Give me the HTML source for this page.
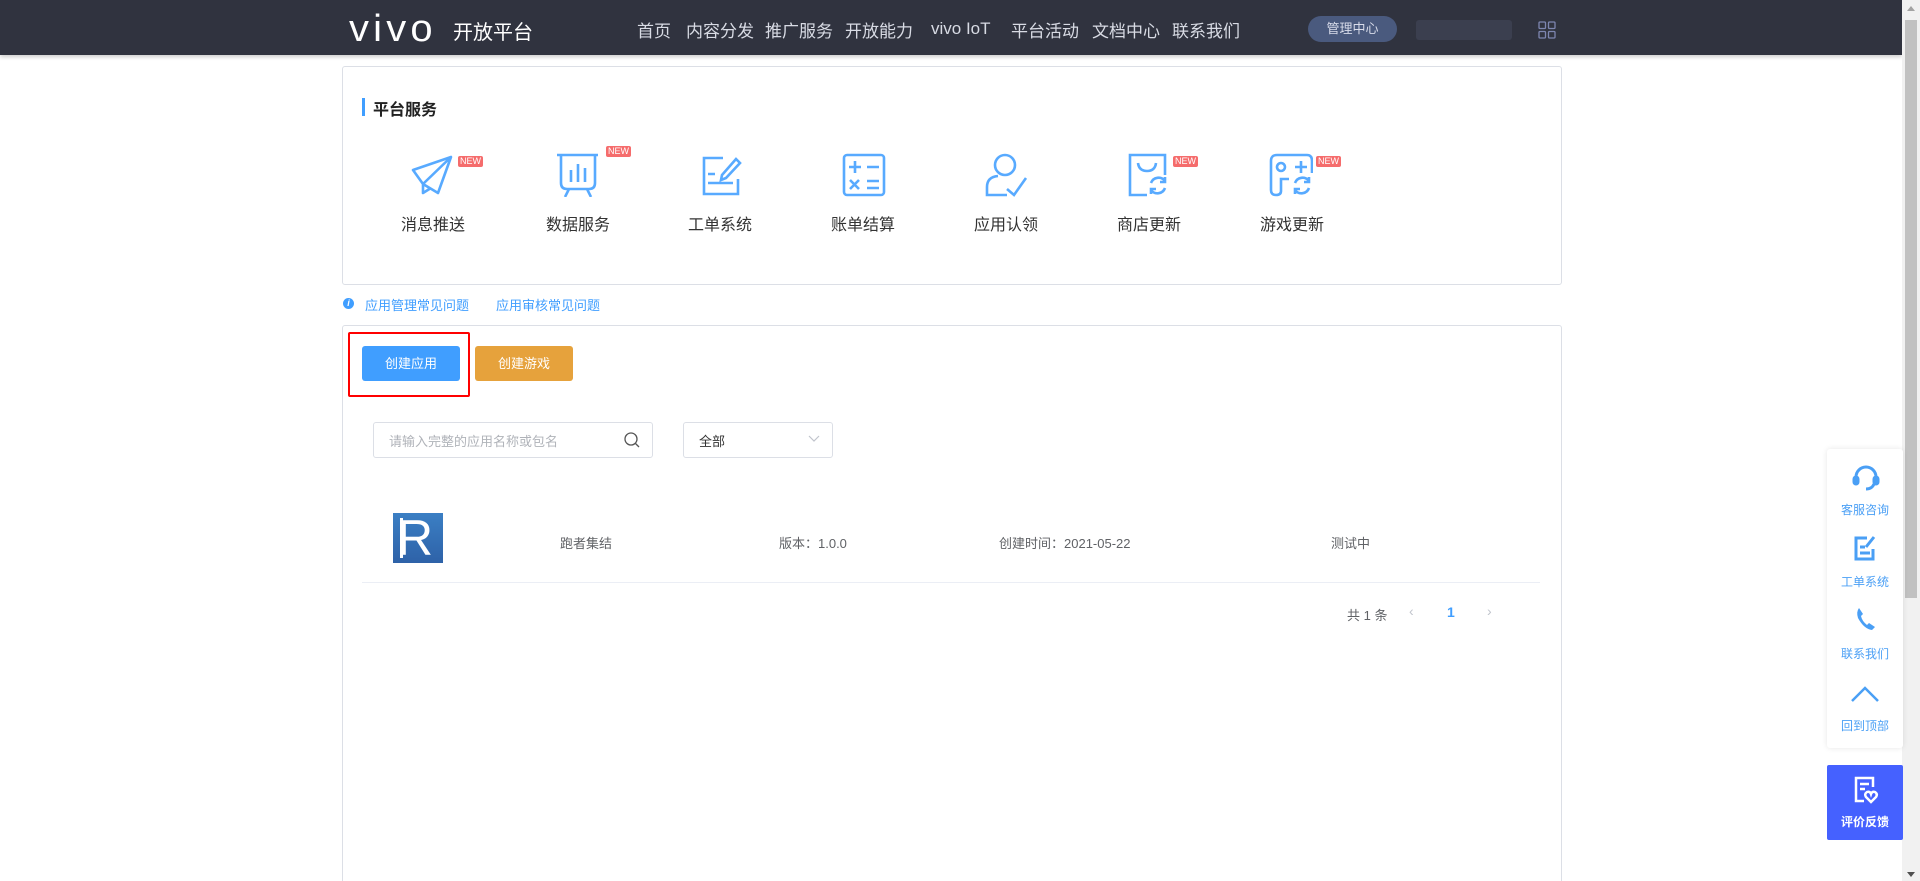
<!DOCTYPE html>
<html style="height:881px;overflow:hidden"><head><meta charset="utf-8"><style>
*{margin:0;padding:0;box-sizing:border-box}
html,body{width:1920px;height:881px;overflow:hidden}
body{background:#fff;font-family:"Liberation Sans","Noto Sans CJK SC",sans-serif;position:relative;color:#333}
.a{position:absolute;white-space:nowrap}
.hdr{position:absolute;left:0;top:0;width:1902px;height:55px;background:#30333f;box-shadow:0 2px 4px rgba(0,0,0,.2)}
.nav{color:#d8dbe4;font-size:17px;top:17px}
.card{position:absolute;border:1px solid #dcdfe6;border-radius:3px;background:#fff}
.lbl{font-size:16px;color:#333;top:211px;width:120px;text-align:center}
.ic{position:absolute;top:153px;width:44px;height:44px}
.new{position:absolute;background:#f56c6c;color:#fff;font-size:9px;line-height:11px;height:11px;padding:0 2px;border-radius:2px}
.row{font-size:13px;color:#606266;top:533px}
.side{color:#4a9ff5;font-size:12px;width:76px;text-align:center;left:1827px}
</style></head><body>
<div class="hdr"></div>
<div class="a" style="left:349px;top:8px;font-size:38px;color:#fff;letter-spacing:4px;transform:scaleX(1.05);transform-origin:left">vivo</div>
<div class="a" style="left:453px;top:16px;font-size:20px;color:#fff">开放平台</div>
<div class="a nav" style="left:637px">首页</div>
<div class="a nav" style="left:686px">内容分发</div>
<div class="a nav" style="left:765px">推广服务</div>
<div class="a nav" style="left:845px">开放能力</div>
<div class="a nav" style="left:931px;top:19px">vivo IoT</div>
<div class="a nav" style="left:1011px">平台活动</div>
<div class="a nav" style="left:1092px">文档中心</div>
<div class="a nav" style="left:1172px">联系我们</div>
<div class="a" style="left:1308px;top:16px;width:89px;height:26px;border-radius:13px;background:#4a5a7e;color:#d8dcea;font-size:13px;line-height:26px;text-align:center">管理中心</div>
<div class="a" style="left:1416px;top:20px;width:96px;height:20px;background:#3b3f4f;border-radius:3px"></div>
<svg class="a" style="left:1538px;top:21px" width="18" height="18" viewBox="0 0 18 18" fill="none" stroke="#7d86b0" stroke-width="1.3"><rect x="1" y="1" width="6.5" height="6.5" rx="1"/><rect x="10.5" y="1" width="6.5" height="6.5" rx="1"/><rect x="1" y="10.5" width="6.5" height="6.5" rx="1"/><rect x="10.5" y="10.5" width="6.5" height="6.5" rx="1"/></svg>
<div class="a" style="left:1902px;top:0;width:18px;height:881px;background:#f1f1f1"></div>
<div class="a" style="left:1905px;top:20px;width:12px;height:578px;background:#c1c1c1"></div>
<div class="a" style="left:1907px;top:6px;width:0;height:0;border:4px solid transparent;border-bottom:5px solid #a3a3a3;border-top:0"></div>
<div class="a" style="left:1907px;top:872px;width:0;height:0;border:4px solid transparent;border-top:5px solid #505050;border-bottom:0"></div>

<div class="card" style="left:342px;top:66px;width:1220px;height:219px"></div>
<div class="a" style="left:362px;top:98px;width:3px;height:18px;background:#409eff"></div>
<div class="a" style="left:373px;top:96px;font-size:16px;font-weight:bold;color:#222">平台服务</div>

<svg class="ic" style="left:411px" viewBox="0 0 44 44" fill="none" stroke="#58aaff" stroke-width="2.6" stroke-linejoin="round"><path d="M2 17 L40 4 L27 40 L12 31 Z M40 4 L12 31 L12 40 L20 35"/></svg>
<div class="new" style="left:458px;top:156px">NEW</div>
<svg class="ic" style="left:556px" viewBox="0 0 44 44" fill="none" stroke="#58aaff" stroke-width="2.6"><path d="M1 2 H42 M5 2 V30 Q5 36 11 36 H33 Q39 36 39 30 V2 M13 36 L9 44 M31 36 L35 44 M15 17 V29 M22 11 V29 M29 15 V29"/></svg>
<div class="new" style="left:606px;top:146px">NEW</div>
<svg class="ic" style="left:700px" viewBox="0 0 44 44" fill="none" stroke="#58aaff" stroke-width="2.6"><path d="M23 5 H4 V41 H38 V26 M8 21 H15 M8 30 H33 M22 22 L36 6 L40 10 L26 25 L21 27 Z"/></svg>
<svg class="ic" style="left:842px" viewBox="0 0 44 44" fill="none" stroke="#58aaff" stroke-width="2.6"><rect x="2" y="2" width="40" height="40" rx="3"/><path d="M7 14 H19 M13 8 V20 M25 14 H37 M8 27 L17 36 M17 27 L8 36 M25 28 H37 M25 35 H37"/></svg>
<svg class="ic" style="left:985px" viewBox="0 0 44 44" fill="none" stroke="#58aaff" stroke-width="2.6"><circle cx="20" cy="12" r="10"/><path d="M13 23 Q2 24 2 34 V42 H22 M22 36 L29 42 L41 25"/></svg>
<svg class="ic" style="left:1127px" viewBox="0 0 44 44" fill="none" stroke="#58aaff" stroke-width="2.6"><path d="M20 42 H3 V2 H38 V22 M11 10 Q12 18 20 18 Q28 18 29 10 M24 30 A8 8 0 0 1 38 28 M38 24 V29 H33 M38 35 A8 8 0 0 1 24 37 M24 41 V36 H29"/></svg>
<div class="new" style="left:1173px;top:156px">NEW</div>
<svg class="ic" style="left:1269px" viewBox="0 0 44 44" fill="none" stroke="#58aaff" stroke-width="2.6"><path d="M20 26 H12 V38 Q12 42 7 42 Q2 42 2 37 V8 Q2 2 8 2 H38 Q43 2 43 8 V20"/><circle cx="12" cy="14" r="4"/><path d="M26 14 H38 M32 8 V20 M26 30 A8 8 0 0 1 40 28 M40 24 V29 H35 M40 35 A8 8 0 0 1 26 37 M26 41 V36 H31"/></svg>
<div class="new" style="left:1316px;top:156px">NEW</div>

<div class="a lbl" style="left:373px">消息推送</div>
<div class="a lbl" style="left:518px">数据服务</div>
<div class="a lbl" style="left:660px">工单系统</div>
<div class="a lbl" style="left:803px">账单结算</div>
<div class="a lbl" style="left:946px">应用认领</div>
<div class="a lbl" style="left:1089px">商店更新</div>
<div class="a lbl" style="left:1232px">游戏更新</div>

<div class="a" style="left:343px;top:298px;width:11px;height:11px;border-radius:50%;background:#409eff;color:#fff;font-size:9px;line-height:11px;text-align:center;font-style:italic;font-weight:bold">i</div>
<div class="a" style="left:365px;top:295px;font-size:13px;color:#409eff">应用管理常见问题</div>
<div class="a" style="left:496px;top:295px;font-size:13px;color:#409eff">应用审核常见问题</div>

<div class="card" style="left:342px;top:325px;width:1220px;height:560px"></div>
<div class="a" style="left:348px;top:332px;width:122px;height:65px;border:2px solid #f00;border-radius:2px"></div>
<div class="a" style="left:362px;top:346px;width:98px;height:35px;background:#409eff;border-radius:3px;color:#fff;font-size:13px;line-height:35px;text-align:center">创建应用</div>
<div class="a" style="left:475px;top:346px;width:98px;height:35px;background:#e6a23c;border-radius:3px;color:#fff;font-size:13px;line-height:35px;text-align:center">创建游戏</div>

<div class="a" style="left:373px;top:422px;width:280px;height:36px;border:1px solid #dcdfe6;border-radius:3px"></div>
<div class="a" style="left:389px;top:431px;font-size:13px;color:#b0b3b9">请输入完整的应用名称或包名</div>
<svg class="a" style="left:623px;top:431px" width="18" height="18" viewBox="0 0 18 18" fill="none" stroke="#555" stroke-width="1.3"><circle cx="8" cy="8" r="6"/><path d="M12.5 12.5 L16 16"/></svg>
<div class="a" style="left:683px;top:422px;width:150px;height:36px;border:1px solid #dcdfe6;border-radius:3px"></div>
<div class="a" style="left:699px;top:431px;font-size:13px;color:#333">全部</div>
<svg class="a" style="left:808px;top:435px" width="12" height="8" viewBox="0 0 12 8" fill="none" stroke="#c0c4cc" stroke-width="1.2"><path d="M1 1 L6 6 L11 1"/></svg>

<div class="a" style="left:393px;top:513px;width:50px;height:50px;background:linear-gradient(#3b7fc4,#2e62a8)"></div>
<div class="a" style="left:397px;top:510px;font-size:50px;color:#fff;font-family:'Liberation Sans',sans-serif;line-height:56px">R</div>
<div class="a" style="left:400px;top:518px;width:3px;height:40px;background:#fff"></div>
<div class="a row" style="left:560px">跑者集结</div>
<div class="a row" style="left:779px">版本：1.0.0</div>
<div class="a row" style="left:999px">创建时间：2021-05-22</div>
<div class="a row" style="left:1331px">测试中</div>
<div class="a" style="left:362px;top:582px;width:1178px;height:1px;background:#ebeef5"></div>
<div class="a" style="left:1347px;top:605px;font-size:13px;color:#606266">共 1 条</div>
<div class="a" style="left:1409px;top:603px;font-size:14px;color:#c0c4cc">‹</div>
<div class="a" style="left:1447px;top:604px;font-size:14px;color:#409eff;font-weight:bold">1</div>
<div class="a" style="left:1487px;top:603px;font-size:14px;color:#c0c4cc">›</div>

<div class="a" style="left:1827px;top:449px;width:76px;height:299px;background:#fff;box-shadow:0 0 6px rgba(0,0,0,.1);border-radius:3px"></div>
<svg class="a" style="left:1852px;top:464px" width="28" height="28" viewBox="0 0 28 28" fill="none" stroke="#4a9ff5" stroke-width="3"><path d="M4 16 V13 A10 10 0 0 1 24 13 V16 M22 20 Q20 25 14 25"/><rect x="2" y="13" width="4" height="7" rx="2" fill="#4a9ff5"/><rect x="22" y="13" width="4" height="7" rx="2" fill="#4a9ff5"/></svg>
<div class="a side" style="top:501px">客服咨询</div>
<svg class="a" style="left:1853px;top:535px" width="24" height="26" viewBox="0 0 24 26" fill="none" stroke="#4a9ff5" stroke-width="3"><path d="M14 3 H3 V24 H20 V14 M7 12 H12 M7 18 H17 M13 12 L21 2"/></svg>
<div class="a side" style="top:573px">工单系统</div>
<svg class="a" style="left:1855px;top:607px" width="22" height="24" viewBox="0 0 22 24"><path d="M4 1 L8 7 L6 9 Q7 14 12 18 L14 16 L20 20 L17 23 Q9 22 3 11 Q1 5 4 1 Z" fill="#4a9ff5"/></svg>
<div class="a side" style="top:645px">联系我们</div>
<svg class="a" style="left:1850px;top:685px" width="30" height="18" viewBox="0 0 30 18" fill="none" stroke="#4a9ff5" stroke-width="2.5"><path d="M2 16 L15 3 L28 16"/></svg>
<div class="a side" style="top:717px">回到顶部</div>
<div class="a" style="left:1827px;top:765px;width:76px;height:75px;background:#4561ff;border-radius:2px"></div>
<svg class="a" style="left:1853px;top:776px" width="26" height="28" viewBox="0 0 26 28" fill="none" stroke="#fff" stroke-width="2.5"><path d="M11 25 H3 V2 H20 V11 M7 8 H16 M7 13 H12"/><path d="M18 26 L13 21 Q11 18 14 16 Q17 15 18 18 Q19 15 22 16 Q25 18 23 21 Z"/></svg>
<div class="a side" style="top:813px;color:#fff;font-weight:bold">评价反馈</div>
</body></html>
